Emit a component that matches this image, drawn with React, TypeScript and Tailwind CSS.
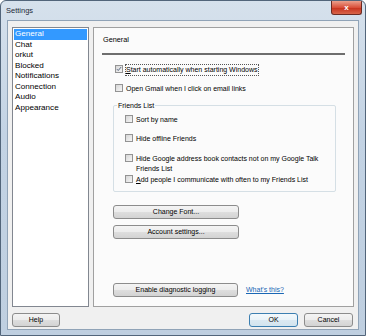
import type { ReactNode } from "react";

const CATEGORIES = ["General", "Chat", "orkut", "Blocked", "Notifications", "Connection", "Audio", "Appearance"];

function Btn({ children, className = "", focus = false }: { children: ReactNode; className?: string; focus?: boolean }) {
  return (
    <div
      className={`flex items-center justify-center rounded-[3px] border text-[7px] text-black ${
        focus
          ? "border-[#3c7fb1] bg-[linear-gradient(#f4f9fc,#e9f3f9_50%,#dbe9f2_51%,#d2e4ef)]"
          : "border-[#8c8c8c] bg-[linear-gradient(#f4f4f4,#ececec_50%,#dedede_51%,#d3d3d3)]"
      } ${className}`}
    >
      {children}
    </div>
  );
}

function Box({ checked = false }: { checked?: boolean }) {
  return (
    <div className="relative h-[8px] w-[8px] shrink-0 border border-[#939393] bg-[linear-gradient(135deg,#d6d6d6,#f6f6f6)]">
      {checked && (
        <svg viewBox="0 0 8 8" className="absolute inset-0 h-full w-full">
          <path d="M1.2 4.2 L3 6 L6.8 1.4" fill="none" stroke="#4a5a78" strokeWidth="1.2" />
        </svg>
      )}
    </div>
  );
}

function Check({ label, checked, focus }: { label: ReactNode; checked?: boolean; focus?: boolean }) {
  return (
    <div className="flex items-start gap-[2px]">
      <Box checked={checked} />
      <span className={`-mt-[1px] leading-[10.5px] ${focus ? "border border-dotted border-[#555]" : "border border-transparent"}`}>
        {label}
      </span>
    </div>
  );
}

export default function App() {
  return (
    <div className="flex h-[336px] w-[366px] flex-col overflow-hidden rounded-t-[6px] border border-[#52657a] bg-[linear-gradient(180deg,#d6e1ec,#c3d3e4_40%,#bfcfe0)] font-['Liberation_Sans',Arial,sans-serif] text-black">
      {/* Title bar */}
      <div className="flex h-[19px] shrink-0 items-start justify-between">
        <span className="pl-[5px] pt-[4px] text-[7.5px] text-[#1e2a38]">Settings</span>
        <div className="mr-[3px] flex h-[14px] w-[31px] items-center justify-center rounded-b-[3px] border border-t-0 border-[#6b2a22] bg-[linear-gradient(#eba08c,#d9503a_50%,#c6301b_51%,#d8654a)] text-[8px] font-bold text-white">
          x
        </div>
      </div>

      {/* Client */}
      <div className="mx-[6px] mb-[5px] flex flex-1 flex-col border border-[#90a3b7] bg-[#f0f0f0] px-[4px] pt-[6px]">
        <div className="flex h-[280px] gap-[4px]">
          {/* Category list */}
          <div className="w-[77px] border border-[#828790] bg-white p-[1px] text-[8.1px] leading-[10.5px]">
            {CATEGORIES.map((c, i) => (
              <div key={c} className={`pl-[1px] ${i === 0 ? "bg-[#3399ff] text-white" : ""}`}>
                {c}
              </div>
            ))}
          </div>

          {/* Settings page */}
          <div className="flex flex-1 flex-col border border-[#a0a0a0] bg-[#fbfbfb] text-[7px]">
            <div className="px-[9px] pt-[7px] text-[7.3px]">General</div>
            <div className="mx-[8px] mt-[7px] h-[2px] bg-[#6e6e6e]" />

            <div className="flex flex-col pl-[21px] pr-[17px] pt-[10px]">
              <Check checked focus label={<><u>S</u>tart automatically when starting Windows</>} />
              <div className="mt-[8px]">
                <Check label="Open Gmail when I click on email links" />
              </div>

              {/* Friends List group */}
              <div className="relative -ml-[2px] mt-[9px] rounded-[2px] border border-[#d5dfe5] pb-[5px] pl-[11px] pr-[8px] pt-[9px]">
                <span className="absolute -top-[5px] left-[3px] bg-[#fbfbfb] px-[1px]">Friends List</span>
                <Check label="Sort by name" />
                <div className="mt-[8px]">
                  <Check label="Hide offline Friends" />
                </div>
                <div className="mt-[8px]">
                  <Check label={<>Hide Google address book contacts not on my Google Talk<br />Friends List</>} />
                </div>
                <div className="-mt-[1px]">
                  <Check label={<><u>A</u>dd people I communicate with often to my Friends List</>} />
                </div>
              </div>

              <Btn className="-ml-[2px] mt-[13px] h-[14px] w-[126px]">Change Font...</Btn>
              <Btn className="-ml-[2px] mt-[6px] h-[14px] w-[126px]">Account settings...</Btn>

              <div className="-ml-[2px] mt-[44px] flex items-center gap-[8px]">
                <Btn className="h-[14px] w-[125px]">Enable diagnostic logging</Btn>
                <span className="text-[#1a67b5] underline">What&apos;s this?</span>
              </div>
            </div>
          </div>
        </div>

        {/* Bottom buttons */}
        <div className="mt-[6px] flex items-center justify-between">
          <Btn className="h-[14px] w-[48px]">Help</Btn>
          <div className="flex gap-[6px] pr-[1px]">
            <Btn focus className="h-[14px] w-[49px]">OK</Btn>
            <Btn className="h-[14px] w-[49px]">Cancel</Btn>
          </div>
        </div>
      </div>
    </div>
  );
}
